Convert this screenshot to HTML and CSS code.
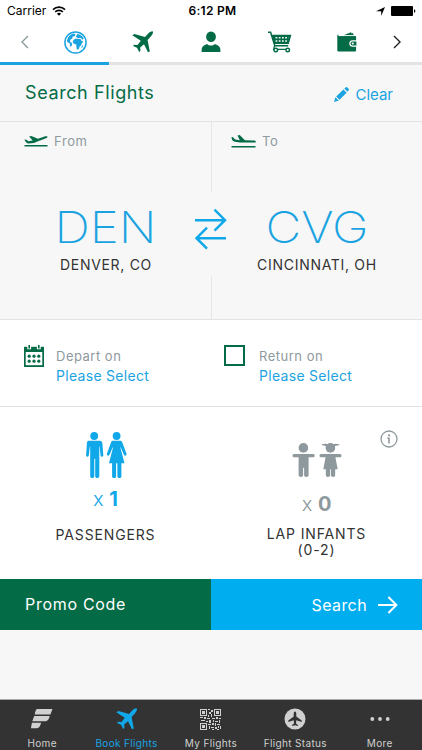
FILE: index.html
```html
<!DOCTYPE html>
<html lang="en">
<head>
    <meta charset="UTF-8">
    <title>Search Flights</title>
    <link rel="stylesheet" href="styles.css">
</head>
<body>
<svg width="0" height="0" class="defs">
    <symbol id="plane" viewBox="0 0 22 22">
        <path d="M20.8.4C19.5 0 17.5 1 16 2.8L13 6 2.5 3 .3 4.2l8.5 5.6L5.5 14l-3.3-.2L1 15l4 1.8L7.2 21l1.2-1-.2-3.5 3.8-3.3 4 8.1 1.8-.8L15.6 9 19 5.2c1.8-2.2 2.3-3.7 1.8-4.8z"/>
    </symbol>
</svg>

<div class="status">
    <div class="carrier">
        <span>Carrier</span>
        <svg width="14" height="10" viewBox="0 0 14 10" stroke="#000" stroke-width="1.6">
            <path d="M1 3.6a8.5 8.5 0 0 1 12 0M3.2 5.9a5.4 5.4 0 0 1 7.6 0"/>
            <path d="M7 9.8L4.9 7.7a3 3 0 0 1 4.2 0z" fill="#000" stroke="none"/>
        </svg>
    </div>
    <div class="time">6:12 PM</div>
    <div class="power">
        <svg width="9" height="9" viewBox="0 0 9 9"><path d="M9 0L5.2 9V4.2H0z"/></svg>
        <svg width="25" height="10" viewBox="0 0 25 10"><rect width="22" height="10" rx="1"/><path d="M23 3.2c1.8.3 1.8 3.3 0 3.6z"/></svg>
    </div>
</div>

<div class="steps">
    <div class="prev"><svg width="8" height="14" viewBox="0 0 8 14"><path d="M7 1L1 7l6 6"/></svg></div>
    <div class="step">
        <svg width="23" height="23" viewBox="0 0 23 23">
            <circle cx="11.5" cy="11.5" r="10.6" fill="none" stroke="#1ba3e1" stroke-width="1.5"/>
            <path fill="#1ba3e1" d="M3 9.2C4 5.5 6.5 3.2 10 2.5l1.6 1-.8 1.6-2.2.6-.3 1.7-2 1.4-.3 1.9 1.7 1 .5 2-1.5 2.2-.7-1.1-.3-2.5L3.2 11zM9.4 9l2.3-1.6 2.4.6 2.2-.3 1.2 2 1.9 1-1.8 1.8-.4 2-1.4.8-1 2.7-1.8.7-.6-2.8-.2-2.3-2.3-.8-1.3-1.9zM11.8 5.8l1.5-2.9c3 .3 5.2 2 6.4 4.6l-1.3 1.3-1.8-2-2.6.5zM17.8 15.3l1.5-1.6-.5 2.3-1.5 1.3z"/>
        </svg>
    </div>
    <div class="step"><svg width="22" height="22"><use href="#plane"/></svg></div>
    <div class="step">
        <svg width="20" height="22" viewBox="0 0 20 22"><ellipse cx="10" cy="5.8" rx="4.9" ry="5.3"/><path d="M.6 21v-2.2c0-3 2.1-4.7 5.5-5.8 2.2 2 5.6 2 7.8 0 3.4 1.1 5.5 2.8 5.5 5.8V21z"/></svg>
    </div>
    <div class="step">
        <svg width="25" height="22" viewBox="0 0 25 22">
            <path d="M1 1.3h2.6l4.2 13.5h13.4" fill="none" stroke="#036b45" stroke-width="1.5"/>
            <path d="M4.4 3.8h20L21.8 13H7z"/>
            <path d="M8.6 6.8h13M8.6 10h12" stroke="#fff" stroke-width="1.6" stroke-dasharray="1.7 1.5"/>
            <path d="M7.6 14.5l-1 3.8h15" fill="none" stroke="#036b45" stroke-width="1.2"/>
            <g fill="#fff" stroke="#036b45" stroke-width="1.4"><circle cx="8.8" cy="19" r="1.8"/><circle cx="20.7" cy="19" r="1.8"/></g>
        </svg>
    </div>
    <div class="step">
        <svg width="20" height="20" viewBox="0 0 20 20">
            <path d="M1.2 4h17.1c.5 0 .8.3.8.8v13.7c0 .5-.4.9-.9.9H1.3c-.6 0-1-.4-1-.9V3.1l1.5-.6z"/>
            <path d="M6.5 3.3L14 .3l.7 1.3 1-.5L17 3.3z"/>
            <path d="M1.7 3.6h16" stroke="#fff" stroke-width=".6"/>
            <path d="M20 8.8h-4.4a2.7 2.7 0 0 0 0 5.4H20z" stroke="#fff" stroke-width="1.2"/>
            <circle cx="15.8" cy="11.5" r="1.1" fill="#fff"/>
        </svg>
    </div>
    <div class="next"><svg width="8" height="14" viewBox="0 0 8 14"><path d="M1 1l6 6-6 6"/></svg></div>
</div>
<div class="progress"><div class="done"></div></div>

<div class="title">
    <h1>Search Flights</h1>
    <div class="clear">
        <svg width="15" height="15" viewBox="0 0 15 15"><path d="M0 15l1.4-4.7 3.4 3.3zM2.2 9.4l7.2-7 3.2 3.3-7.1 7.1zM10.3 1.6L11.7.4c.5-.5 1-.5 1.5 0l1.4 1.4c.5.5.5 1 0 1.5l-1.2 1.4z"/></svg>
        <span>Clear</span>
    </div>
</div>

<div class="route">
    <div class="airport from">
        <div class="label">
            <svg width="24" height="12" viewBox="0 0 24 12"><path d="M.4 4.6l2 .2 1.9 1.4 4.4-.8L5.1 1.6l2.2-.5L14 3.8l6.5-2.2c1.3-.4 2.6-.5 3 .1.2.7-.9 1.2-2.1 1.7l-6.7 2.5-4.8 2-5.5.5C3 8.4 1.6 7.6.4 4.6zM.5 9.9h23v1.5H.5z"/></svg>
            <span>From</span>
        </div>
        <div class="code">DEN</div>
        <div class="city">DENVER, CO</div>
    </div>
    <div class="airport to">
        <div class="label">
            <svg width="25" height="13" viewBox="0 0 25 13"><path d="M.4 2.2l1.2-.1L4.2 4.5l4.6.7L6.5.4 8.7.1l5.2 5.2 8.6.3c1.4 0 2.3.5 2.4 1.1-.2.7-1 .9-2.6.9h-8.5l-4.9-.2-4.9-.6C1.8 6.3.9 5 .4 2.2zM.5 10.9h24v1.5H.5z"/></svg>
            <span>To</span>
        </div>
        <div class="code">CVG</div>
        <div class="city">CINCINNATI, OH</div>
    </div>
    <div class="swap">
        <svg width="32" height="42" viewBox="0 0 32 42"><path d="M0 12.2h30M19.5 1.7L30 12.2 19.5 22.7M31 30.2H1.5M12 19.7L1.5 30.2 12 40.7"/></svg>
    </div>
</div>

<div class="dates">
    <div class="date">
        <svg width="20" height="22" viewBox="0 0 20 22">
            <path d="M0 1.8h20V22H0z"/>
            <path d="M1.7 7h16.6v13.2H1.7z" fill="#fff"/>
            <path d="M3.3 0h3.8v4.2H3.3zM12.9 0h3.8v4.2h-3.8z" fill="#fff"/>
            <path d="M4.4 0h1.6v3.4H4.4zM14 0h1.6v3.4H14z"/>
            <g><circle cx="5.2" cy="11.2" r="1.6"/><circle cx="10" cy="11.2" r="1.6"/><circle cx="14.8" cy="11.2" r="1.6"/><circle cx="5.2" cy="16.2" r="1.6"/><circle cx="10" cy="16.2" r="1.6"/><circle cx="14.8" cy="16.2" r="1.6"/></g>
        </svg>
        <div>
            <div class="when">Depart on</div>
            <div class="pick">Please Select</div>
        </div>
    </div>
    <div class="date return">
        <div class="check"></div>
        <div>
            <div class="when">Return on</div>
            <div class="pick">Please Select</div>
        </div>
    </div>
</div>

<div class="people">
    <div class="count adults">
        <svg width="42" height="47" viewBox="0 0 42 47">
            <circle cx="9.2" cy="4" r="3.9"/>
            <path d="M3.8 8.8h11c1.6 0 2.4 1 2.6 2.4l.9 12c0 1.8-2.4 2-2.7.2l-1-9.4-.3 1v29.3c0 2.4-4 2.4-4.1 0V26.8h-.9v17.5c-.1 2.4-4.1 2.4-4.1 0V15l-.3-1-1.1 9.4c-.4 1.8-2.8 1.6-2.7-.2l.8-12c.1-1.4.6-2.4 1.9-2.4z"/>
            <circle cx="31.6" cy="4" r="3.9"/>
            <path d="M28.2 8.8h6.9c1.2 0 1.8.6 2.2 1.7l4.2 11.3c.5 1.8-1.8 2.6-2.6.9l-3.3-7.6-.1 1 4 15.1h-3.1v13.2c-.1 2.2-3.8 2.2-4 0V31.2h-1.3v13.2c-.1 2.2-3.8 2.2-4 0V31.2H24l3.9-15.1-.1-1-3.3 7.6c-.9 1.7-3.1.9-2.6-.9L26 10.5c.4-1.1 1-1.7 2.2-1.7z"/>
        </svg>
        <div class="num">x <b>1</b></div>
        <div class="kind">PASSENGERS</div>
    </div>
    <div class="count infants">
        <svg width="50" height="35" viewBox="0 0 50 35">
            <circle cx="11.4" cy="4.9" r="4.8"/>
            <path d="M2 11h19.2c2 0 2 3.3 0 3.3h-4.6v17.9c-.1 2.3-4.4 2.3-4.5 0v-7.4h-1v7.4c-.1 2.3-4.4 2.3-4.5 0V14.3H2c-2 0-2-3.3 0-3.3z"/>
            <circle cx="38.4" cy="4.9" r="4.8"/>
            <path d="M29.3 1.6c2.8-1 5.4-1 7 0v1.2c-2.5.5-5 .3-7-1.2zM47.8 1.6c-2.8-1-5.4-1-7 0v1.2c2.5.5 5 .3 7-1.2z"/>
            <path d="M29 11h19c2 0 2 3.3 0 3.3h-4.6l2.3 11.9h-2.5v6c-.1 2.3-4.2 2.3-4.3 0v-6h-.8v6c-.1 2.3-4.2 2.3-4.3 0v-6h-2.5l2.3-11.9H29c-2 0-2-3.3 0-3.3z"/>
        </svg>
        <div class="num">x <b>0</b></div>
        <div class="kind">LAP INFANTS<br>(0-2)</div>
        <svg class="info" width="18" height="18" viewBox="0 0 18 18"><circle cx="9" cy="9" r="8" fill="none" stroke="#8e999d" stroke-width="1.3"/><path d="M8 4.4h2v1.8H8zM7.2 7.6h2.6v5.8H8.2V8.8h-1z"/></svg>
    </div>
</div>

<div class="actions">
    <div class="promo">Promo Code</div>
    <div class="search">
        <span>Search</span>
        <svg width="20" height="18" viewBox="0 0 20 18"><path d="M0 9h18.4M10.4 1l8 8-8 8"/></svg>
    </div>
</div>

<div class="tabs">
    <div class="tab">
        <svg width="22" height="20" viewBox="0 0 22 20"><path d="M6 0h15.5l-2.1 5.5H3.7C4.2 2 5 .6 6 0zM3.2 7h15.5c-.7 3.3-2 5.2-4.1 5.2H1.3zM.9 13.8h9.2c-.9 3.5-1.8 5.4-4.4 5.4H-.1z"/></svg>
        <span>Home</span>
    </div>
    <div class="tab active">
        <svg width="22" height="22"><use href="#plane"/></svg>
        <span>Book Flights</span>
    </div>
    <div class="tab">
        <svg width="21" height="21" viewBox="0 0 21 21" shape-rendering="crispEdges">
            <path d="M0 0h7v7H0zM1 1v5h5V1zM14 0h7v7h-7zM15 1v5h5V1zM0 14h7v7H0zM1 15v5h5v-5z" fill-rule="evenodd"/>
            <path d="M2 2h3v3H2zM16 2h3v3h-3zM2 16h3v3H2zM8 0h2v1H8zM11 1h2v2h-2zM9 3h2v2H9zM8 6h1v2H8zM11 5h1v3h-1zM0 8h3v1H0zM4 8h2v2H4zM7 9h3v1H7zM1 11h4v1H1zM6 12h2v1H6zM9 11h2v3H9zM12 9h3v1h-3zM16 8h2v2h-2zM19 9h2v1h-2zM13 11h1v2h-1zM15 12h3v1h-3zM19 11h1v3h-1zM8 15h3v1H8zM12 14h2v2h-2zM15 14h1v3h-1zM17 15h3v1h-3zM9 17h1v3H9zM11 18h3v1h-3zM15 18h2v2h-2zM18 17h1v2h-1zM20 17h1v3h-1zM12 20h2v1h-2zM17 20h2v1h-2z"/>
        </svg>
        <span>My Flights</span>
    </div>
    <div class="tab">
        <svg width="22" height="22" viewBox="0 0 22 22"><circle cx="11" cy="11" r="10.5"/><path fill="#333" d="M11 3.5c.9 0 1.3 1.2 1.3 2.5v2.6l5.4 3.8v1.5l-5.4-1.7-.3 3.4 1.9 1.3v1L11 17.3l-2.9.6v-1l1.9-1.3-.3-3.4-5.4 1.7v-1.5l5.4-3.8V6c0-1.3.4-2.5 1.3-2.5z"/></svg>
        <span>Flight Status</span>
    </div>
    <div class="tab">
        <svg width="20" height="20" viewBox="0 0 20 20"><circle cx="2.3" cy="10" r="1.9"/><circle cx="10" cy="10" r="1.9"/><circle cx="17.7" cy="10" r="1.9"/></svg>
        <span>More</span>
    </div>
</div>
</body>
</html>
```

FILE: styles.css
```css
* {
    box-sizing: border-box;
}

body {
    margin: 0;
    width: 422px;
    height: 750px;
    overflow: hidden;
    display: flex;
    flex-direction: column;
    background: #f7f7f7;
    font-family: Inter, "Liberation Sans", sans-serif;
    color: #333;
}

svg {
    display: block;
    flex: none;
    fill: #036b45;
}

.defs {
    position: absolute;
}

/* status bar */
.status {
    height: 22px;
    padding: 0 6px 0 7px;
    display: grid;
    grid-template-columns: 1fr auto 1fr;
    align-items: center;
    background: #fff;
    color: #000;
    font-size: 12px;
    line-height: 22px;
}

.status svg {
    fill: #000;
}

.status .carrier svg {
    fill: none;
}

.carrier, .power {
    display: flex;
    align-items: center;
    gap: 6px;
}

.power {
    justify-content: flex-end;
}

.time {
    padding-left: 2px;
    font-weight: 600;
    letter-spacing: 0.3px;
}

/* steps */
.steps {
    height: 40px;
    display: grid;
    grid-template-columns: 41px repeat(5, 68px) 41px;
    align-items: center;
    background: #fff;
}

.step {
    display: flex;
    justify-content: center;
}

.prev {
    padding-left: 21px;
}

.next {
    padding-left: 12px;
}

.prev svg, .next svg {
    fill: none;
    stroke: #8e999d;
    stroke-width: 1.4;
}

.next svg {
    stroke: #222;
}

.progress {
    height: 3px;
    background: #e3e3e3;
}

.done {
    width: 109px;
    height: 3px;
    background: #1ba3e1;
}

/* title */
.title {
    height: 57px;
    padding: 0 29px 0 25px;
    display: flex;
    justify-content: space-between;
    align-items: center;
    border-bottom: 1px solid #e3e3e3;
}

h1 {
    margin: 0;
    padding-bottom: 1px;
    font-size: 18px;
    font-weight: 400;
    letter-spacing: 0.6px;
    color: #036b45;
}

.clear {
    padding-top: 3px;
    display: flex;
    align-items: center;
    gap: 6px;
    font-size: 15px;
    color: #1ba3e1;
}

.clear svg {
    fill: #1ba3e1;
}

/* route */
.route {
    position: relative;
    height: 198px;
    display: grid;
    grid-template-columns: 211px 211px;
    border-bottom: 1px solid #e3e3e3;
}

.airport {
    text-align: center;
}

.to {
    border-left: 1px solid #e6e6e6;
}

.label {
    height: 38px;
    padding-left: 24px;
    display: flex;
    align-items: center;
    gap: 6px;
    font-size: 13px;
    letter-spacing: 0.6px;
    color: #8e999d;
}

.to .label {
    padding-left: 19px;
}

.code {
    margin-top: 39px;
    height: 57px;
    line-height: 56px;
    font-size: 44px;
    font-weight: 200;
    color: #1ba3e1;
    transform: scaleX(1.12);
}

.city {
    line-height: 18px;
    font-size: 14px;
    letter-spacing: 0.7px;
}

.from .city {
    padding-left: 1px;
}

.swap {
    position: absolute;
    left: 195px;
    top: 70px;
    height: 84px;
    padding-top: 16px;
    background: #f7f7f7;
}

.swap svg {
    fill: none;
    stroke: #10a8e8;
    stroke-width: 2.5;
}

/* dates */
.dates {
    height: 87px;
    display: grid;
    grid-template-columns: 200px 222px;
    background: #fff;
    border-bottom: 1px solid #e3e3e3;
}

.date {
    padding: 25px 0 0 24px;
    display: flex;
    gap: 12px;
}

.return {
    gap: 14px;
}

.check {
    width: 21px;
    height: 21px;
    border: 2px solid #036b45;
}

.when, .pick {
    line-height: 20px;
}

.when {
    padding-top: 1px;
    font-size: 13px;
    letter-spacing: 0.5px;
    color: #8e999d;
}

.pick {
    font-size: 14px;
    letter-spacing: 0.3px;
    color: #1ba3e1;
}

/* passengers */
.people {
    height: 172px;
    display: grid;
    grid-template-columns: 211px 211px;
    background: #fff;
}

.count {
    position: relative;
    display: flex;
    flex-direction: column;
    align-items: center;
}

.adults {
    padding-top: 25px;
    color: #10a8e8;
}

.adults svg {
    fill: #10a8e8;
}

.infants {
    padding-top: 36px;
    color: #8e999d;
}

.infants svg {
    fill: #8e999d;
}

.num {
    height: 48px;
    padding-top: 5px;
    line-height: 30px;
    font-size: 20px;
    font-weight: 300;
}

.num b {
    font-weight: 700;
}

.infants .num {
    padding-top: 11px;
}

.kind {
    line-height: 16px;
    font-size: 14px;
    letter-spacing: 0.85px;
    text-align: center;
    color: #333;
}

.info {
    position: absolute;
    top: 23px;
    right: 24px;
}

/* buttons */
.actions {
    height: 51px;
    display: grid;
    grid-template-columns: 211px 211px;
    line-height: 50px;
    font-size: 16px;
    color: #fff;
}

.promo {
    padding-left: 25px;
    letter-spacing: 0.7px;
    background: #036b45;
}

.search {
    padding-right: 24px;
    display: flex;
    align-items: center;
    justify-content: flex-end;
    gap: 11px;
    letter-spacing: 0.4px;
    background: #00adef;
}

.search svg {
    fill: none;
    stroke: #fff;
    stroke-width: 2;
}

/* bottom tabs */
.tabs {
    margin-top: auto;
    height: 51px;
    display: grid;
    grid-template-columns: repeat(5, 84.4px);
    background: #333;
    border-top: 1px solid #aaa;
}

.tab {
    display: flex;
    flex-direction: column;
    align-items: center;
    font-size: 10px;
    letter-spacing: 0.35px;
    color: #d0d0d0;
}

.tab svg {
    height: 22px;
    margin-top: 8px;
    fill: #d0d0d0;
}

.tab span {
    margin-top: 7px;
    line-height: 12px;
}

.active {
    color: #1ba3e1;
}

.tab.active svg {
    fill: #10a8e8;
}
```
